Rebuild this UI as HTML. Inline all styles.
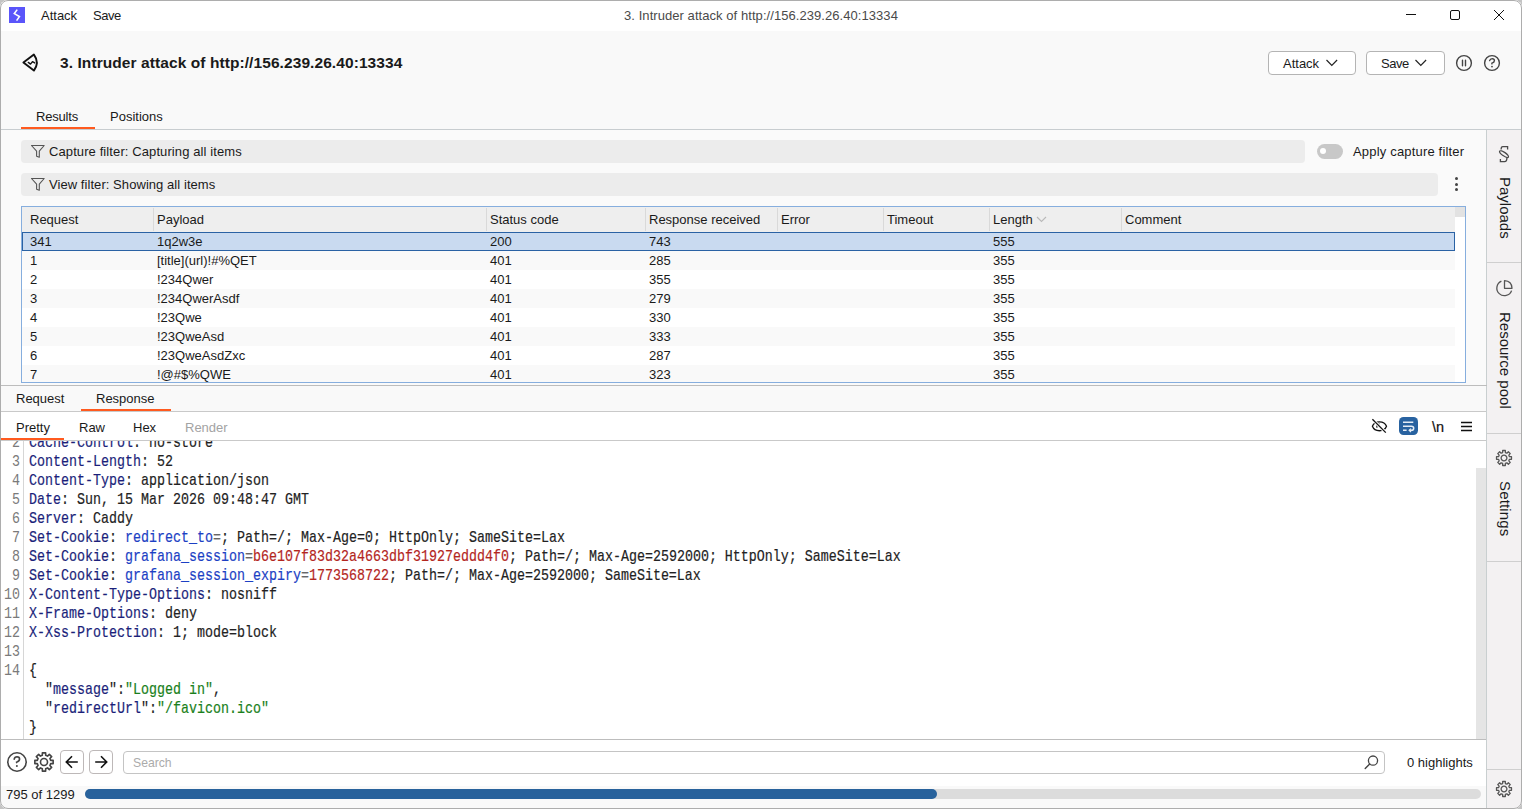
<!DOCTYPE html>
<html><head><meta charset="utf-8">
<style>
*{box-sizing:border-box;margin:0;padding:0}
html,body{width:1522px;height:809px;overflow:hidden;background:#c4c4c4}
body{position:relative;font-family:"Liberation Sans",sans-serif;font-size:13px;color:#1a1a1a}
.a{position:absolute}
.t{position:absolute;white-space:pre;line-height:16px;font-size:13px;margin-top:1px}
.tb .t{margin-top:0}
.hl{position:absolute;height:1px;background:#cfcfcf}
.vl{position:absolute;width:1px;background:#cfcfcf}
.code{position:absolute;font-family:"Liberation Mono",monospace;font-size:13.33px;line-height:15.8333px;white-space:pre;color:#222;transform:scaleY(1.2);transform-origin:0 0;-webkit-text-stroke:0.15px currentColor}
.cl{position:relative;height:19px;line-height:19px;white-space:pre;font-family:"Liberation Mono",monospace;font-size:13.33px}
.lnn{position:absolute;left:1px;width:18px;text-align:right;display:inline-block;transform:scaleY(1.2);color:#7a7a7a}
.cc{position:absolute;left:28px;display:inline-block;transform:scaleY(1.2);color:#222;-webkit-text-stroke:0.15px currentColor}
.k{color:#1b1f7a}
.cn{color:#1c3fc4}
.cv{color:#b3261e}
.js{color:#1a7f1a}
.eq{color:#666}
.ln{position:absolute;font-family:"Liberation Mono",monospace;font-size:13.33px;line-height:15.8333px;white-space:pre;color:#7a7a7a;text-align:right;width:18px;left:0px;transform:scaleY(1.2);transform-origin:0 0}
</style></head>
<body>
<div class="a" style="left:0;top:0;width:1522px;height:809px;background:#fff;border-radius:8px;overflow:hidden"></div>
<!-- title bar -->
<div class="a" style="left:0;top:0;width:1522px;height:31px;background:#fff;border-radius:8px 8px 0 0"></div>
<div class="a" style="left:9px;top:7px;width:16px;height:16px;background:#5a5cf6"></div>
<div class="t" style="left:41px;top:7px">Attack</div>
<div class="t" style="left:93px;top:7px;letter-spacing:-0.5px">Save</div>
<div class="t" style="left:0;width:1522px;text-align:center;top:7px;color:#4a4a4a;letter-spacing:0.06px">3. Intruder attack of http://156.239.26.40:13334</div>

<!-- header -->
<div class="a" style="left:0;top:31px;width:1522px;height:98px;background:#f9f9f9"></div>
<div class="t" style="left:60px;top:52px;font-size:15.5px;letter-spacing:0.08px;font-weight:bold;line-height:19px">3. Intruder attack of http://156.239.26.40:13334</div>
<div class="a" style="left:1268px;top:51px;width:88px;height:24px;border:1px solid #b4b4b4;border-radius:4px;background:#fff"></div>
<div class="t" style="left:1283px;top:55px">Attack</div>
<div class="a" style="left:1366px;top:51px;width:79px;height:24px;border:1px solid #b4b4b4;border-radius:4px;background:#fff"></div>
<div class="t" style="left:1381px;top:55px;letter-spacing:-0.5px">Save</div>

<div class="t" style="left:36px;top:108px;letter-spacing:-0.2px">Results</div>
<div class="t" style="left:110px;top:108px">Positions</div>
<div class="a" style="left:21px;top:127px;width:74px;height:2px;background:#ff5a1f"></div>
<div class="hl" style="left:0;top:129px;width:1522px;background:#c8cdd0"></div>

<!-- main results area -->
<div class="a" style="left:0;top:130px;width:1487px;height:255px;background:#fafafa"></div>
<div class="a" style="left:21px;top:140px;width:1284px;height:23px;background:#ececec;border-radius:4px"></div>
<div class="t" style="left:49px;top:143px;letter-spacing:0.1px">Capture filter: Capturing all items</div>
<div class="a" style="left:1317px;top:144px;width:26px;height:15px;background:#c8c8c8;border-radius:8px"></div>
<div class="a" style="left:1320px;top:148px;width:6px;height:6px;background:#fff;border-radius:50%"></div>
<div class="t" style="left:1353px;top:143px;letter-spacing:0.18px">Apply capture filter</div>
<div class="a" style="left:21px;top:173px;width:1417px;height:23px;background:#ececec;border-radius:4px"></div>
<div class="t" style="left:49px;top:176px;letter-spacing:0.06px">View filter: Showing all items</div>

<!-- table -->
<div class="a tb" style="left:21px;top:206px;width:1445px;height:177px;border:1px solid #86aede;background:#fff;overflow:hidden">
<div class="a" style="left:0;top:0;width:1433px;height:25px;background:#eeeeee"></div>
<div class="a" style="left:1433px;top:0;width:10px;height:10px;background:#e2e2e2"></div>
<div class="a" style="left:131px;top:1px;width:1px;height:23px;background:#d9d9d9"></div>
<div class="a" style="left:464px;top:1px;width:1px;height:23px;background:#d9d9d9"></div>
<div class="a" style="left:623px;top:1px;width:1px;height:23px;background:#d9d9d9"></div>
<div class="a" style="left:755px;top:1px;width:1px;height:23px;background:#d9d9d9"></div>
<div class="a" style="left:861px;top:1px;width:1px;height:23px;background:#d9d9d9"></div>
<div class="a" style="left:967px;top:1px;width:1px;height:23px;background:#d9d9d9"></div>
<div class="a" style="left:1099px;top:1px;width:1px;height:23px;background:#d9d9d9"></div>
<div class="t" style="left:8px;top:5px">Request</div>
<div class="t" style="left:135px;top:5px">Payload</div>
<div class="t" style="left:468px;top:5px">Status code</div>
<div class="t" style="left:627px;top:5px">Response received</div>
<div class="t" style="left:759px;top:5px">Error</div>
<div class="t" style="left:865px;top:5px">Timeout</div>
<div class="t" style="left:971px;top:5px">Length</div>
<div class="t" style="left:1103px;top:5px">Comment</div>
<svg class="a" style="left:1014px;top:9px" width="11" height="7" viewBox="0 0 11 7"><path d="M1 1 L5.5 5.5 L10 1" fill="none" stroke="#b9b9b9" stroke-width="1.1"/></svg>
<div class="a" style="left:0;top:25px;width:1433px;height:19px;background:#c9daf0;border:1px solid #2a62a4"></div>
<div class="t" style="left:8px;top:27px">341</div>
<div class="t" style="left:135px;top:27px">1q2w3e</div>
<div class="t" style="left:468px;top:27px">200</div>
<div class="t" style="left:627px;top:27px">743</div>
<div class="t" style="left:971px;top:27px">555</div>
<div class="a" style="left:0;top:44px;width:1433px;height:19px;background:#f9f9f9"></div>
<div class="t" style="left:8px;top:46px">1</div>
<div class="t" style="left:135px;top:46px">[title](url)!#%QET</div>
<div class="t" style="left:468px;top:46px">401</div>
<div class="t" style="left:627px;top:46px">285</div>
<div class="t" style="left:971px;top:46px">355</div>
<div class="t" style="left:8px;top:65px">2</div>
<div class="t" style="left:135px;top:65px">!234Qwer</div>
<div class="t" style="left:468px;top:65px">401</div>
<div class="t" style="left:627px;top:65px">355</div>
<div class="t" style="left:971px;top:65px">355</div>
<div class="a" style="left:0;top:82px;width:1433px;height:19px;background:#f9f9f9"></div>
<div class="t" style="left:8px;top:84px">3</div>
<div class="t" style="left:135px;top:84px">!234QwerAsdf</div>
<div class="t" style="left:468px;top:84px">401</div>
<div class="t" style="left:627px;top:84px">279</div>
<div class="t" style="left:971px;top:84px">355</div>
<div class="t" style="left:8px;top:103px">4</div>
<div class="t" style="left:135px;top:103px">!23Qwe</div>
<div class="t" style="left:468px;top:103px">401</div>
<div class="t" style="left:627px;top:103px">330</div>
<div class="t" style="left:971px;top:103px">355</div>
<div class="a" style="left:0;top:120px;width:1433px;height:19px;background:#f9f9f9"></div>
<div class="t" style="left:8px;top:122px">5</div>
<div class="t" style="left:135px;top:122px">!23QweAsd</div>
<div class="t" style="left:468px;top:122px">401</div>
<div class="t" style="left:627px;top:122px">333</div>
<div class="t" style="left:971px;top:122px">355</div>
<div class="t" style="left:8px;top:141px">6</div>
<div class="t" style="left:135px;top:141px">!23QweAsdZxc</div>
<div class="t" style="left:468px;top:141px">401</div>
<div class="t" style="left:627px;top:141px">287</div>
<div class="t" style="left:971px;top:141px">355</div>
<div class="a" style="left:0;top:158px;width:1433px;height:19px;background:#f9f9f9"></div>
<div class="t" style="left:8px;top:160px">7</div>
<div class="t" style="left:135px;top:160px">!@#$%QWE</div>
<div class="t" style="left:468px;top:160px">401</div>
<div class="t" style="left:627px;top:160px">323</div>
<div class="t" style="left:971px;top:160px">355</div>

</div>

<!-- sidebar -->
<div class="a" style="left:1486px;top:130px;width:36px;height:679px;background:#f3f1f2;border-left:1px solid #c9cfd0;border-radius:0 0 8px 0"></div>

<!-- req/resp tabs -->
<div class="hl" style="left:0;top:385px;width:1487px;background:#bdbdbd"></div>
<div class="a" style="left:0;top:386px;width:1486px;height:25px;background:#f9f9f9"></div>
<div class="t" style="left:16px;top:390px">Request</div>
<div class="t" style="left:96px;top:390px">Response</div>
<div class="a" style="left:81px;top:409px;width:90px;height:2px;background:#ff5a1f"></div>
<div class="hl" style="left:0;top:411px;width:1486px;background:#c9c9c9"></div>
<div class="t" style="left:16px;top:419px">Pretty</div>
<div class="t" style="left:79px;top:419px">Raw</div>
<div class="t" style="left:133px;top:419px">Hex</div>
<div class="t" style="left:185px;top:419px;color:#a3a3a3">Render</div>
<div class="a" style="left:0;top:438px;width:64px;height:2px;background:#ff5a1f"></div>
<div class="hl" style="left:0;top:440px;width:1486px;background:#c9c9c9"></div>

<!-- code -->
<div class="a" style="left:1px;top:441px;width:1485px;height:298px;background:#fff;overflow:hidden">
<div class="a" style="left:22px;top:0;width:1px;height:298px;background:#d6d6d6"></div>
<div class="a" style="left:1475px;top:27px;width:10px;height:271px;background:#e5e5e5"></div>
<div class="a" style="left:0;top:-8px;width:1475px">
<div class="cl"><span class="lnn">2</span><span class="cc"><span class="k">Cache-Control</span>: no-store</span></div>
<div class="cl"><span class="lnn">3</span><span class="cc"><span class="k">Content-Length</span>: 52</span></div>
<div class="cl"><span class="lnn">4</span><span class="cc"><span class="k">Content-Type</span>: application/json</span></div>
<div class="cl"><span class="lnn">5</span><span class="cc"><span class="k">Date</span>: Sun, 15 Mar 2026 09:48:47 GMT</span></div>
<div class="cl"><span class="lnn">6</span><span class="cc"><span class="k">Server</span>: Caddy</span></div>
<div class="cl"><span class="lnn">7</span><span class="cc"><span class="k">Set-Cookie</span>: <span class="cn">redirect_to</span><span class="eq">=</span>; Path=/; Max-Age=0; HttpOnly; SameSite=Lax</span></div>
<div class="cl"><span class="lnn">8</span><span class="cc"><span class="k">Set-Cookie</span>: <span class="cn">grafana_session</span><span class="eq">=</span><span class="cv">b6e107f83d32a4663dbf31927eddd4f0</span>; Path=/; Max-Age=2592000; HttpOnly; SameSite=Lax</span></div>
<div class="cl"><span class="lnn">9</span><span class="cc"><span class="k">Set-Cookie</span>: <span class="cn">grafana_session_expiry</span><span class="eq">=</span><span class="cv">1773568722</span>; Path=/; Max-Age=2592000; SameSite=Lax</span></div>
<div class="cl"><span class="lnn">10</span><span class="cc"><span class="k">X-Content-Type-Options</span>: nosniff</span></div>
<div class="cl"><span class="lnn">11</span><span class="cc"><span class="k">X-Frame-Options</span>: deny</span></div>
<div class="cl"><span class="lnn">12</span><span class="cc"><span class="k">X-Xss-Protection</span>: 1; mode=block</span></div>
<div class="cl"><span class="lnn">13</span><span class="cc">&nbsp;</span></div>
<div class="cl"><span class="lnn">14</span><span class="cc">{</span></div>
<div class="cl"><span class="lnn"></span><span class="cc">  "<span class="k">message</span>":<span class="js">"Logged in"</span>,</span></div>
<div class="cl"><span class="lnn"></span><span class="cc">  "<span class="k">redirectUrl</span>":<span class="js">"/favicon.ico"</span></span></div>
<div class="cl"><span class="lnn"></span><span class="cc">}</span></div>
</div>
</div>
<!-- bottom -->
<div class="hl" style="left:0;top:739px;width:1486px;background:#bdbdbd"></div>
<div class="a" style="left:0;top:786px;width:1486px;height:23px;background:#f9f9f9;border-radius:0 0 0 8px"></div>
<div class="t" style="left:6px;top:786px">795 of 1299</div>
<div class="a" style="left:85px;top:789px;width:1396px;height:10px;background:#dcdcdc;border-radius:5px"></div>
<div class="a" style="left:85px;top:789px;width:852px;height:10px;background:#28629c;border-radius:5px"></div>
<div class="a" style="left:123px;top:751px;width:1262px;height:23px;border:1px solid #c4c4c4;border-radius:4px;background:#fff"></div>
<div class="t" style="left:133px;top:753.5px;color:#ababab;font-size:12.2px">Search</div>
<div class="t" style="left:1407px;top:754px">0 highlights</div>

<!-- icons -->
<svg class="a" style="left:9px;top:7px" width="16" height="16" viewBox="0 0 16 16"><rect width="16" height="16" fill="#5a55fa"/><path d="M8.2 2.6 L5.3 6.6 L10.4 9.6 L7.6 13.6" fill="none" stroke="#fff" stroke-width="1.6" stroke-linejoin="miter"/></svg>
<svg class="a" style="left:20px;top:52px" width="22" height="22" viewBox="0 0 22 22"><path d="M3.4 10.5 L13.9 2.6 Q19.8 10.5 13.9 18.6 Z" fill="none" stroke="#111" stroke-width="1.9" stroke-linejoin="round"/><path d="M8.3 10.4 L10.5 12.1 L12.5 9.6 L14.7 10.9" fill="none" stroke="#111" stroke-width="1.4" stroke-linejoin="round" stroke-linecap="round"/></svg>
<svg class="a" style="left:1325px;top:58px" width="14" height="10" viewBox="0 0 14 10"><path d="M1.5 2 L6.8 7.3 L12.1 2" fill="none" stroke="#222" stroke-width="1.2"/></svg>
<svg class="a" style="left:1414px;top:58px" width="14" height="10" viewBox="0 0 14 10"><path d="M1.5 2 L6.8 7.3 L12.1 2" fill="none" stroke="#222" stroke-width="1.2"/></svg>
<svg class="a" style="left:1454px;top:53px" width="20" height="20" viewBox="0 0 20 20"><circle cx="10" cy="10" r="7.4" fill="none" stroke="#444" stroke-width="1.4"/><path d="M8.5 7.3 V12.7 M11.5 7.3 V12.7" stroke="#444" stroke-width="1.4" stroke-linecap="round"/></svg>
<svg class="a" style="left:1482px;top:53px" width="20" height="20" viewBox="0 0 20 20"><circle cx="10" cy="10" r="7.4" fill="none" stroke="#444" stroke-width="1.4"/><path d="M7.6 7.6 Q8.2 5.6 10.2 5.6 Q12.4 5.8 12.4 7.6 Q12.3 9.4 9.9 10.2 V10.9" fill="none" stroke="#444" stroke-width="1.4" stroke-linecap="round"/><circle cx="10" cy="13.6" r="0.9" fill="#444"/></svg>
<!-- window controls -->
<div class="a" style="left:1406px;top:14px;width:10px;height:1px;background:#111"></div>
<div class="a" style="left:1450px;top:10px;width:10px;height:10px;border:1px solid #111;border-radius:2px"></div>
<svg class="a" style="left:1493px;top:9px" width="12" height="12" viewBox="0 0 12 12"><path d="M1 1 L11 11 M11 1 L1 11" stroke="#111" stroke-width="1"/></svg>
<!-- funnels -->
<svg class="a" style="left:30px;top:144px" width="16" height="15" viewBox="0 0 16 15"><path d="M1.5 1.5 H14.2 L9.3 7.2 V13.3 L6.6 12.2 V7.2 Z" fill="none" stroke="#555" stroke-width="1.1" stroke-linejoin="round"/></svg>
<svg class="a" style="left:30px;top:177px" width="16" height="15" viewBox="0 0 16 15"><path d="M1.5 1.5 H14.2 L9.3 7.2 V13.3 L6.6 12.2 V7.2 Z" fill="none" stroke="#555" stroke-width="1.1" stroke-linejoin="round"/></svg>
<!-- kebab -->
<div class="a" style="left:1455px;top:177px;width:3px;height:3px;border-radius:50%;background:#444"></div>
<div class="a" style="left:1455px;top:183px;width:3px;height:3px;border-radius:50%;background:#444"></div>
<div class="a" style="left:1455px;top:188px;width:3px;height:3px;border-radius:50%;background:#444"></div>
<!-- sidebar content -->
<div class="a" style="left:1487px;top:262px;width:34px;height:1px;background:#cfcfcf"></div>
<div class="a" style="left:1487px;top:433px;width:34px;height:1px;background:#cfcfcf"></div>
<div class="a" style="left:1487px;top:561px;width:34px;height:1px;background:#cfcfcf"></div>
<div class="a" style="left:1487px;top:769px;width:34px;height:1px;background:#cfcfcf"></div>
<svg class="a" style="left:1496px;top:144px" width="16" height="20" viewBox="0 0 16 20"><g fill="none" stroke="#4a4a4a" stroke-width="1.3"><path d="M11.6 5.6 V2.6 H6.8 Q5.1 2.6 5.1 5.4"/><ellipse cx="8" cy="10.1" rx="5.3" ry="1.75" transform="rotate(34 8 10.1)"/><path d="M10.9 13.6 Q11 17.6 8.6 17.6 H4.4 V14.9"/></g></svg>
<div class="t" style="left:1514px;top:176px;font-size:15px;line-height:17px;transform:rotate(90deg);transform-origin:0 0">Payloads</div>
<svg class="a" style="left:1494px;top:278px" width="20" height="20" viewBox="0 0 20 20"><path d="M7.4 3.1 A7.6 7.6 0 1 0 17.6 12.6" fill="none" stroke="#555" stroke-width="1.3"/><path d="M10.5 2.6 V10.3 H18 Q17.8 2.9 10.5 2.6 Z" fill="none" stroke="#555" stroke-width="1.3" stroke-linejoin="round"/></svg>
<div class="t" style="left:1514px;top:311px;font-size:15px;line-height:17px;transform:rotate(90deg);transform-origin:0 0">Resource pool</div>
<svg class="a" style="left:1494px;top:448px" width="20" height="20" viewBox="-10 -10 20 20" ><path d="M5.43 -1.35 L7.48 -1.34 L7.48 1.34 L5.43 1.35 L4.80 2.89 L6.24 4.35 L4.35 6.24 L2.89 4.80 L1.35 5.43 L1.34 7.48 L-1.34 7.48 L-1.35 5.43 L-2.89 4.80 L-4.35 6.24 L-6.24 4.35 L-4.80 2.89 L-5.43 1.35 L-7.48 1.34 L-7.48 -1.34 L-5.43 -1.35 L-4.80 -2.89 L-6.24 -4.35 L-4.35 -6.24 L-2.89 -4.80 L-1.35 -5.43 L-1.34 -7.48 L1.34 -7.48 L1.35 -5.43 L2.89 -4.80 L4.35 -6.24 L6.24 -4.35 L4.80 -2.89 Z" fill="none" stroke="#555" stroke-width="1.3" stroke-linejoin="round"/><circle r="2.9" fill="none" stroke="#555" stroke-width="1.3"/></svg>
<div class="t" style="left:1514px;top:480px;font-size:15px;letter-spacing:0.15px;line-height:17px;transform:rotate(90deg);transform-origin:0 0">Settings</div>
<svg class="a" style="left:1494px;top:779px" width="20" height="20" viewBox="-10 -10 20 20" ><path d="M5.43 -1.35 L7.48 -1.34 L7.48 1.34 L5.43 1.35 L4.80 2.89 L6.24 4.35 L4.35 6.24 L2.89 4.80 L1.35 5.43 L1.34 7.48 L-1.34 7.48 L-1.35 5.43 L-2.89 4.80 L-4.35 6.24 L-6.24 4.35 L-4.80 2.89 L-5.43 1.35 L-7.48 1.34 L-7.48 -1.34 L-5.43 -1.35 L-4.80 -2.89 L-6.24 -4.35 L-4.35 -6.24 L-2.89 -4.80 L-1.35 -5.43 L-1.34 -7.48 L1.34 -7.48 L1.35 -5.43 L2.89 -4.80 L4.35 -6.24 L6.24 -4.35 L4.80 -2.89 Z" fill="none" stroke="#555" stroke-width="1.3" stroke-linejoin="round"/><circle r="2.9" fill="none" stroke="#555" stroke-width="1.3"/></svg>
<!-- editor toolbar -->
<svg class="a" style="left:1370px;top:417px" width="19" height="18" viewBox="0 0 19 18"><path d="M2.4 9.3 C4.6 3.4 14.3 3.4 16.5 9.3 C14.3 15.2 4.6 15.2 2.4 9.3 Z" fill="none" stroke="#111" stroke-width="1.3"/><path d="M7.2 10.6 A2.3 2.3 0 0 1 9.6 7.2" fill="none" stroke="#111" stroke-width="1.3"/><path d="M2.4 2.2 L15.8 15.6" stroke="#fff" stroke-width="3"/><path d="M2.4 2.2 L15.8 15.6" stroke="#111" stroke-width="1.3"/></svg>
<svg class="a" style="left:1399px;top:417px" width="19" height="18" viewBox="0 0 19 18"><rect width="19" height="18" rx="4.5" fill="#2862a0"/><path d="M4 5.2 H14.3 M4 9.3 H12.3 Q14.7 9.3 14.7 11.2 Q14.7 13.3 12.3 13.3 H10.8 M4 13.3 H7.6" fill="none" stroke="#e4ecf6" stroke-width="1.5"/><path d="M12 11.6 L10.2 13.3 L12 15" fill="none" stroke="#e4ecf6" stroke-width="1.3"/></svg>
<div class="t" style="left:1432px;top:418px;font-size:14.5px;color:#111;-webkit-text-stroke:0.2px #111">\n</div>
<svg class="a" style="left:1460px;top:418px" width="14" height="16" viewBox="0 0 14 16"><path d="M1 4.5 H12 M1 8.5 H12 M1 12.5 H12" stroke="#111" stroke-width="1.3"/></svg>
<!-- bottom toolbar icons -->
<svg class="a" style="left:6px;top:751px" width="22" height="22" viewBox="0 0 22 22"><circle cx="11" cy="11" r="9.2" fill="none" stroke="#444" stroke-width="1.6"/><path d="M8.2 8.2 Q8.6 5.8 11 5.8 Q13.6 5.9 13.6 8.2 Q13.4 10.3 10.6 11.2 V11.6" fill="none" stroke="#444" stroke-width="1.6" stroke-linecap="round"/><circle cx="10.9" cy="15.1" r="1" fill="#444"/></svg>
<svg class="a" style="left:33px;top:751px" width="22" height="22" viewBox="-11 -11 22 22" ><path d="M6.70 -1.66 L9.16 -1.63 L9.16 1.63 L6.70 1.66 L5.91 3.56 L7.63 5.32 L5.32 7.63 L3.56 5.91 L1.66 6.70 L1.63 9.16 L-1.63 9.16 L-1.66 6.70 L-3.56 5.91 L-5.32 7.63 L-7.63 5.32 L-5.91 3.56 L-6.70 1.66 L-9.16 1.63 L-9.16 -1.63 L-6.70 -1.66 L-5.91 -3.56 L-7.63 -5.32 L-5.32 -7.63 L-3.56 -5.91 L-1.66 -6.70 L-1.63 -9.16 L1.63 -9.16 L1.66 -6.70 L3.56 -5.91 L5.32 -7.63 L7.63 -5.32 L5.91 -3.56 Z" fill="none" stroke="#444" stroke-width="1.6" stroke-linejoin="round"/><circle r="3.5" fill="none" stroke="#444" stroke-width="1.6"/></svg>
<div class="a" style="left:60px;top:750px;width:24px;height:24px;border:1px solid #bdb8b8;border-radius:4px;background:#fff"></div>
<svg class="a" style="left:60px;top:750px" width="24" height="24" viewBox="0 0 24 24"><path d="M12 6.3 L6.3 12 L12 17.7 M6.5 12 H17.8" fill="none" stroke="#111" stroke-width="1.6"/></svg>
<div class="a" style="left:89px;top:750px;width:24px;height:24px;border:1px solid #bdb8b8;border-radius:4px;background:#fff"></div>
<svg class="a" style="left:89px;top:750px" width="24" height="24" viewBox="0 0 24 24"><path d="M12 6.3 L17.7 12 L12 17.7 M17.5 12 H6.2" fill="none" stroke="#111" stroke-width="1.6"/></svg>
<svg class="a" style="left:1363px;top:754px" width="17" height="17" viewBox="0 0 17 17"><circle cx="10" cy="6.6" r="4.6" fill="none" stroke="#444" stroke-width="1.3"/><path d="M6.7 9.9 L2.2 14.4" stroke="#444" stroke-width="1.4" stroke-linecap="round"/></svg>
<!-- window border -->
<div class="a" style="left:0;top:0;width:1522px;height:809px;border:1px solid #adadad;border-radius:8px;pointer-events:none"></div>
</body></html>
